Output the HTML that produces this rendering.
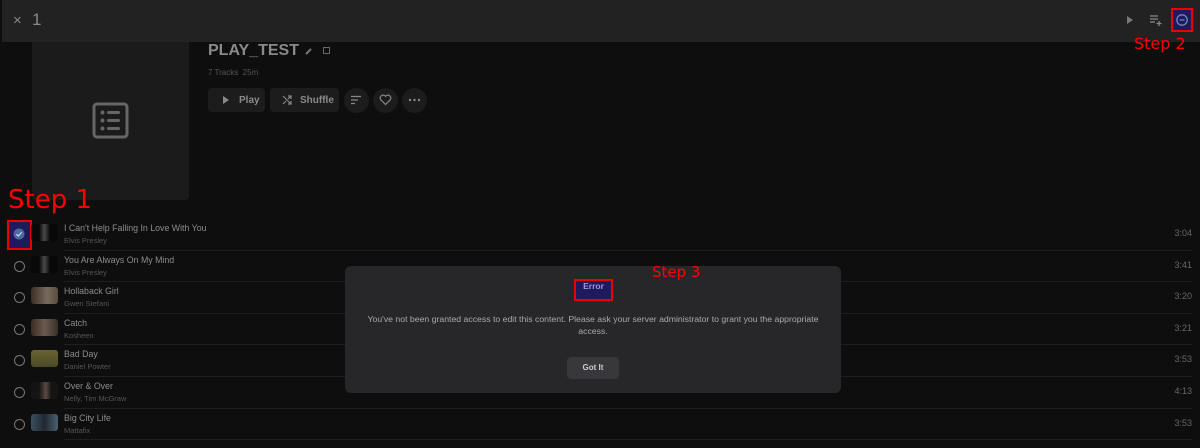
<!DOCTYPE html>
<html><head><meta charset="utf-8"><style>
*{box-sizing:border-box;margin:0;padding:0}
body{width:1200px;height:448px;background:#0e0e0e;font-family:"Liberation Sans",sans-serif;overflow:hidden;position:relative;color:#bbb}
.hdr{position:absolute;left:2px;top:0;width:1198px;height:42px;background:#222;}
.abs{position:absolute}
.art{left:32px;top:42px;width:157px;height:158px;background:#1b1b1b;border-radius:0 0 4px 4px}
.btn{position:absolute;top:88px;height:24px;background:#1c1c1c;border-radius:4px;color:#8a8a8a;font-size:10px;font-weight:bold;display:flex;align-items:center}
.cb{position:absolute;width:25px;height:25px;border-radius:50%;background:#1c1c1c;top:88px}
.row{position:absolute;left:0;width:1200px;height:31.6px}
.row .c{position:absolute;left:14px;top:10px;width:11px;height:11px;border:1.3px solid #777;border-radius:50%}
.row .th{position:absolute;left:31px;top:5px;width:27px;height:17px;border-radius:3px}
.row .t{position:absolute;left:64px;top:4px;font-size:8.8px;color:#8c8c8c}
.row .a{position:absolute;left:64px;top:17px;font-size:7.5px;color:#555}
.row .d{position:absolute;right:8px;top:9px;font-size:9px;color:#666}
.row .ln{position:absolute;left:64px;right:8px;bottom:0;height:1px;background:#1e1e1e}
.step{position:absolute;color:#f00;font-family:"DejaVu Sans",sans-serif}
</style></head><body>
<div class="hdr"></div>
<div class="abs" style="left:13px;top:12px;color:#888;font-size:15px">×</div>
<div class="abs" style="left:32px;top:10px;color:#888;font-size:17px">1</div>
<svg class="abs" style="left:1125px;top:15px" width="10" height="10"><path d="M2 1L8 5L2 9Z" fill="#777"/></svg>
<svg class="abs" style="left:1149px;top:14px" width="14" height="12"><path d="M1 2H9M1 5H9M1 8H6M10 7V12M7.5 9.5H12.5" stroke="#888" stroke-width="1.3"/></svg>
<div class="abs" style="left:1171px;top:8px;width:22px;height:24px;background:#1c1c5c;border:2px solid #e00"></div>
<svg class="abs" style="left:1175px;top:13px" width="14" height="14"><circle cx="7" cy="7" r="5.2" stroke="#7d7dc8" stroke-width="1.3" fill="none"/><path d="M4.5 7H9.5" stroke="#7d7dc8" stroke-width="1.3"/></svg>
<div class="step" style="left:1134px;top:34px;font-size:16px">Step 2</div>

<div class="abs art"></div>
<svg class="abs" style="left:92px;top:102px" width="37" height="37"><rect x="2" y="2" width="33" height="33" rx="3" fill="none" stroke="#666" stroke-width="3"/><circle cx="10.5" cy="10.5" r="2" fill="#666"/><circle cx="10.5" cy="18.5" r="2" fill="#666"/><circle cx="10.5" cy="26.5" r="2" fill="#666"/><rect x="15" y="9" width="13" height="3" rx="1.5" fill="#666"/><rect x="15" y="17" width="13" height="3" rx="1.5" fill="#666"/><rect x="15" y="25" width="13" height="3" rx="1.5" fill="#666"/></svg>

<div class="abs" style="left:208px;top:42px;font-size:16px;font-weight:bold;color:#8a8a8a">PLAY_TEST</div>
<svg class="abs" style="left:304px;top:46px" width="10" height="10"><path d="M2 8L7 3" stroke="#777" stroke-width="2"/></svg>
<svg class="abs" style="left:322px;top:46px" width="10" height="10"><rect x="1.5" y="1.5" width="6" height="6" fill="none" stroke="#666"/></svg>
<div class="abs" style="left:208px;top:68px;font-size:8px;color:#555">7 Tracks &nbsp;25m</div>

<div class="btn" style="left:208px;width:57px"><svg style="margin:0 9px 0 14px" width="8" height="8"><path d="M1 0L7 4L1 8Z" fill="#888"/></svg>Play</div>
<div class="btn" style="left:270px;width:69px"><svg style="margin:0 8px 0 12px" width="10" height="10"><path d="M1 1L9 9M6 9H9V6M1 9L4 6M6 4L9 1M6 1H9V4" stroke="#888" stroke-width="1.2" fill="none"/></svg>Shuffle</div>
<div class="cb" style="left:344px"></div>
<svg class="abs" style="left:350px;top:95px" width="12" height="10"><path d="M1 1.5H11M1 5H8M1 8.5H5" stroke="#888" stroke-width="1.2"/></svg>
<div class="cb" style="left:373px"></div>
<svg class="abs" style="left:379px;top:94px" width="13" height="12"><path d="M6.5 10.5L1.8 5.8A2.6 2.6 0 0 1 6.5 2.3A2.6 2.6 0 0 1 11.2 5.8Z" fill="none" stroke="#888" stroke-width="1.2"/></svg>
<div class="cb" style="left:402px"></div>
<svg class="abs" style="left:408px;top:98px" width="13" height="4"><circle cx="2" cy="2" r="1.2" fill="#888"/><circle cx="6.5" cy="2" r="1.2" fill="#888"/><circle cx="11" cy="2" r="1.2" fill="#888"/></svg>

<div class="step" style="left:8px;top:185px;font-size:26px">Step 1</div>

<div class="row" style="top:219px"><div class="abs" style="left:7px;top:1px;width:25px;height:30px;background:#1c1c5c;border:2px solid #e00"></div><svg class="abs" style="left:12px;top:8px" width="14" height="14"><circle cx="7" cy="7" r="5.5" fill="#4c6aa0"/><path d="M4.3 7.2L6.2 9L9.7 5.3" stroke="#c8d4ec" stroke-width="1.2" fill="none"/></svg><div class="th" style="background:linear-gradient(90deg,#080808 30%,#4a4a4a 50%,#080808 70%)"></div><div class="t">I Can't Help Falling In Love With You</div><div class="a">Elvis Presley</div><div class="d">3:04</div><div class="ln"></div></div>
<div class="row" style="top:250.6px"><div class="c"></div><div class="th" style="background:linear-gradient(90deg,#080808 30%,#4a4a4a 50%,#080808 70%)"></div><div class="t">You Are Always On My Mind</div><div class="a">Elvis Presley</div><div class="d">3:41</div><div class="ln"></div></div>
<div class="row" style="top:282.2px"><div class="c"></div><div class="th" style="background:linear-gradient(90deg,#3a2e28,#7a6a5e 60%,#5a4c40)"></div><div class="t">Hollaback Girl</div><div class="a">Gwen Stefani</div><div class="d">3:20</div><div class="ln"></div></div>
<div class="row" style="top:313.8px"><div class="c"></div><div class="th" style="background:linear-gradient(90deg,#3a2a22,#6a5a50,#3a3028)"></div><div class="t">Catch</div><div class="a">Kosheen</div><div class="d">3:21</div><div class="ln"></div></div>
<div class="row" style="top:345.4px"><div class="c"></div><div class="th" style="background:linear-gradient(180deg,#6a6430,#4a4a28)"></div><div class="t">Bad Day</div><div class="a">Daniel Powter</div><div class="d">3:53</div><div class="ln"></div></div>
<div class="row" style="top:377px"><div class="c"></div><div class="th" style="background:linear-gradient(90deg,#141414 30%,#5a4a40 55%,#141414 75%)"></div><div class="t">Over &amp; Over</div><div class="a">Nelly, Tim McGraw</div><div class="d">4:13</div><div class="ln"></div></div>
<div class="row" style="top:408.6px"><div class="c"></div><div class="th" style="background:linear-gradient(90deg,#3a5060,#202830,#4a6070)"></div><div class="t">Big City Life</div><div class="a">Mattafix</div><div class="d">3:53</div><div class="ln"></div></div>

<div class="abs" style="left:345px;top:266px;width:496px;height:127px;background:#27272a;border-radius:6px"></div>
<div class="abs" style="left:574px;top:279px;width:39px;height:22px;background:#1c1c5c;border:2px solid #e00"></div>
<div class="abs" style="left:574px;top:281px;width:39px;text-align:center;font-size:8.5px;font-weight:bold;color:#9a9ad8">Error</div>
<div class="step" style="left:652px;top:263px;font-size:15px">Step 3</div>
<div class="abs" style="left:345px;top:313px;width:496px;text-align:center;font-size:8.7px;line-height:12px;color:#aaa;padding:0 22px">You've not been granted access to edit this content. Please ask your server administrator to grant you the appropriate access.</div>
<div class="abs" style="left:567px;top:357px;width:52px;height:22px;background:#38383c;border-radius:4px;text-align:center;line-height:22px;font-size:8px;font-weight:bold;color:#ccc">Got It</div>
</body></html>
